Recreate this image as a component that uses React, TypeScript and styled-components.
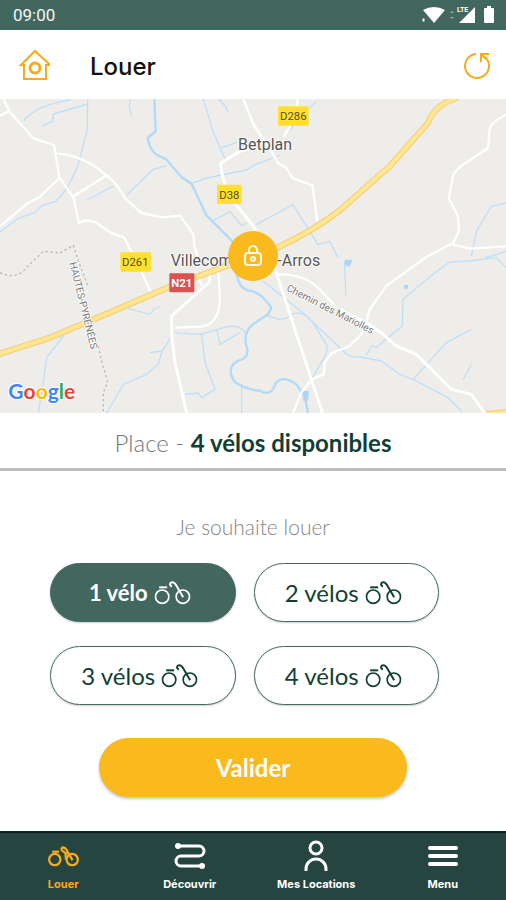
import React, { useState } from "react";
import styled, { createGlobalStyle } from "styled-components";

const colors = {
  green: "#42675f",
  darkGreen: "#264440",
  ink: "#123f34",
  yellow: "#fab91c",
  amber: "#f5ab1a",
};

const GlobalStyle = createGlobalStyle`
  * { box-sizing: border-box; }
  body { margin: 0; background: #fff; font-family: Lato, "Open Sans", sans-serif; }
  button { font: inherit; border: 0; padding: 0; background: none; cursor: pointer; }
  svg { display: block; }
`;

const Page = styled.div`
  display: flex;
  flex-direction: column;
  min-height: 100vh;
`;

const StatusBar = styled.div`
  display: flex;
  align-items: center;
  justify-content: space-between;
  height: 30px;
  padding: 0 1px 0 13px;
  background: ${colors.green};
  color: #f2f7f6;
  font: 17px/20px Roboto, sans-serif;
`;

const Header = styled.header`
  display: flex;
  align-items: center;
  height: 69px;
  padding: 0 15px 0 19px;
`;

const Title = styled.h1`
  flex: 1;
  margin: 0 0 0 38px;
  padding-top: 4px;
  color: #111;
  font: 500 24px/32px Inter, sans-serif;
`;

const IconButton = styled.button`
  color: ${colors.amber};
`;

const MapArea = styled.section`
  position: relative;
  height: 314px;
  overflow: hidden;
  background: #efedea;

  > svg { width: 100%; height: 100%; }
`;

const Pin = styled.button`
  position: absolute;
  top: 50%;
  left: 50%;
  display: grid;
  place-items: center;
  width: 50px;
  height: 50px;
  margin: -25px;
  border-radius: 50%;
  background: ${colors.yellow};
  color: #fff8e6;
`;

const Availability = styled.p`
  margin: 0;
  padding: 17px 0 12px;
  border-bottom: 3px solid #bdbdbd;
  color: #777;
  font-size: 24px;
  font-weight: 300;
  line-height: 26px;
  text-align: center;

  strong { color: ${colors.ink}; font-weight: 700; }
`;

const Form = styled.form`
  display: flex;
  flex: 1;
  flex-direction: column;
  align-items: center;
  padding: 42px 50px 32px;
`;

const Question = styled.h2`
  margin: 0 0 22px;
  color: #858585;
  font-size: 21px;
  font-weight: 300;
  line-height: 28px;
`;

const Choices = styled.div`
  display: grid;
  grid-template-columns: 1fr 1fr;
  gap: 24px 18px;
  align-self: stretch;
  margin-right: 17px;
`;

const Choice = styled.button<{ $active: boolean }>`
  display: flex;
  align-items: center;
  justify-content: center;
  gap: 6px;
  height: 59px;
  padding: 0 6px 0 0;
  border: 1px solid ${colors.green};
  border-radius: 30px;
  background: ${(p) => (p.$active ? colors.green : "#fff")};
  box-shadow: 0 1px 2px rgba(0, 0, 0, 0.2);
  color: ${(p) => (p.$active ? "#fff" : colors.ink)};
  font-size: ${(p) => (p.$active ? 22 : 24)}px;
  font-weight: ${(p) => (p.$active ? 700 : 400)};
`;

const Submit = styled.button`
  width: 76%;
  height: 59px;
  margin-top: 33px;
  border-radius: 30px;
  background: ${colors.yellow};
  box-shadow: 0 2px 3px rgba(0, 0, 0, 0.22);
  color: #fff;
  font-size: 24px;
  font-weight: 700;
`;

const TabBar = styled.nav`
  display: grid;
  grid-template-columns: repeat(4, 1fr);
  height: 69px;
  border-top: 2px solid #0e1f1d;
  background: ${colors.darkGreen};
`;

const Tab = styled.a<{ $active?: boolean }>`
  display: flex;
  flex-direction: column;
  align-items: center;
  padding-top: 7px;
  color: ${(p) => (p.$active ? colors.amber : "#fff")};
  font: 700 11px/14px Inter, sans-serif;
  text-decoration: none;
  white-space: nowrap;
`;

const TabIcon = styled.span`
  display: grid;
  place-items: center;
  height: 32px;
  margin-bottom: 5px;
`;

function Bike({ heavy = false }: { heavy?: boolean }) {
  return (
    <svg width={heavy ? 31 : 37} height={heavy ? 21 : 24} viewBox="0 0 110 72" fill="none" stroke="currentColor" strokeWidth={heavy ? 8 : 5} aria-hidden="true">
      <circle cx="24" cy="47" r="20" />
      <circle cx="86" cy="47" r="20" />
      <path d="M15 19h24" strokeWidth={heavy ? 8 : 6} />
      <path d="M87 49L66 13Q59 1 50 5 44 12 53 17" strokeWidth={heavy ? 8 : 6} />
      {heavy && <path d="M53 17L64 26 72 22M62 25L64 47" />}
    </svg>
  );
}

function StatusIcons() {
  return (
    <svg width="84" height="20" viewBox="0 0 84 20" fill="#fff" aria-label="Wi-Fi, LTE, batterie">
      <path d="M2 5Q13-1 24 5L13 18z" />
      <path d="M1 13h3v4H1z" stroke={colors.green} />
      <path d="M29 8l2-2 2 2zM29 12l2 2 2-2z" opacity=".45" />
      <path d="M54 2v16H38z" />
      <path d="M36 0h12v8H36z" fill={colors.green} />
      <text x="36" y="7" fontSize="7" fontWeight="700" fontFamily="Roboto, sans-serif">LTE</text>
      <path d="M66 1h4v2h2q1 0 1 1v13q0 1-1 1h-8q-1 0-1-1V4q0-1 1-1h2z" />
    </svg>
  );
}

const minorRoads = [
  "M10 0L30 40 100 118 162 138 178 235 220 295 237 372Q260 357 290 372L330 400 372 415 395 460 425 520 452 580",
  "M168 163Q255 170 318 228 350 250 375 298L425 342 485 355 540 350 580 405 583 440 600 500",
  "M318 230L220 292M175 240L120 293 80 315 0 382M0 50L25 38",
  "M730 0L760 75 819 165 834 192 859 207 877 237 937 259 947 327 952 370",
  "M894 0L886 40 869 85 850 115",
  "M1518 47Q1469 72 1469 92L1464 147 1385 200Q1355 222 1357 245L1346 297 1374 352 1377 397 1359 432 1280 473 1159 561 1109 631 1099 671 1084 706 1049 741 994 763 974 791 971 826 934 841 904 881 879 942",
  "M1359 437L1409 449 1518 442M834 526Q910 525 954 566L1009 625",
  "M655 521L660 591Q660 680 600 683L525 686M595 535L606 560",
];
const mainRoads = [
  "M768 142L720 157 662 193 667 230 690 300 712 322 759 380 829 521 967 942",
  "M1020 632L1099 671 1144 701 1189 741 1249 766 1289 806 1354 871 1414 886 1454 942",
  "M630 516L628 549 515 651 515 711 525 791 560 942",
];
const streams = [
  "M213 2Q105 20 72 65M263 15L160 45 157 67 125 82",
  "M263 0L262 90 235 195Q205 275 165 308L125 320 105 340 55 358 0 400",
  "M390 0L388 25 395 50M500 200L460 211 380 288M340 261L262 303",
  "M610 0L640 100 675 180M660 148L710 130M655 0L675 20 685 40",
  "M575 253L620 237 740 213 759 200 840 168M869 95L895 55 950 8",
  "M640 365L690 338 725 380 740 373",
  "M769 377L879 317 954 437 989 427 1014 475",
  "M1518 312L1474 322 1429 397 1414 472M1518 457L1455 477",
  "M1518 505L1489 476 1409 486 1349 489 1299 526 1209 601 1207 681 1129 745 1115 740 1099 769",
  "M789 546L909 641 1035 761Q1050 775 1080 774L1144 786 1199 826 1239 841 1344 896 1384 936",
  "M804 651L839 661 859 658Q900 620 939 671L975 730Q990 750 970 780L934 841",
  "M1239 841L1339 731 1414 691M1389 843L1414 796M1034 486L1037 590",
  "M385 629L450 646 462 630 480 623M190 711L140 776 130 850 115 942",
  "M515 711L485 760 475 795 440 826 370 856 320 942M485 756L450 761",
  "M525 701L600 706 690 681Q725 680 735 701M605 706L615 791 645 871 605 896 595 882 555 886",
  "M650 691L660 736 720 701M725 856V942",
];

function RoadMap() {
  return (
    <svg viewBox="0 0 1518 942" preserveAspectRatio="xMidYMid slice" fill="none" strokeLinejoin="round" fontFamily="Roboto, sans-serif" role="img" aria-label="Carte de Villecomtal-sur-Arros">
      <g stroke="#bfdff6" strokeWidth="4">
        {streams.map((d) => <path key={d} d={d} />)}
      </g>
      <path d="M463 0L467 97 443 117Q450 155 470 167L500 182 545 235 575 255 620 350 700 430M710 525Q715 565 745 575 780 575 814 626L804 646 759 676Q725 702 742 750 745 780 715 785 675 805 705 850 740 873 780 875 815 895 828 850 850 828 889 856L914 891 924 942" stroke="#b2daf7" strokeWidth="7" />
      <path d="M907 876h20l-4 29h-13zM1034 482h24l-10 22-13-5zM1212 558l14 0-5 14-10-4zM1124 227l14-7-9 14z" fill="#acd6f7" />
      <g stroke="#fff" strokeWidth="7">
        {minorRoads.map((d) => <path key={d} d={d} />)}
      </g>
      <g stroke="#fff" strokeWidth="9">
        {mainRoads.map((d) => <path key={d} d={d} />)}
      </g>
      {[["#f4cf7e", 19], ["#ffe690", 12]].map(([color, width]) => (
        <path key={color} stroke={color as string} strokeWidth={width} d="M-10 767L150 716 270 666 510 563 660 508 834 445Q950 390 1024 330L1169 202 1284 72Q1300 20 1374-5M1460 945L1530 938" />
      ))}
      <path d="M0 521Q50 545 80 505L130 457 180 462 220 439 235 485 265 565M295 741L303 780 323 850 310 880V942" stroke="#bbb7b4" strokeWidth="4" strokeDasharray="7 8" />

      <g fill="#ffe031">
        <rect x="834" y="22" width="92" height="58" rx="4" />
        <rect x="651" y="257" width="74" height="58" rx="4" />
        <rect x="361" y="460" width="92" height="58" rx="4" />
      </g>
      <rect x="508" y="523" width="75" height="57" rx="3" fill="#dc5252" />
      <g fill="#574e1d" fontSize="34" textAnchor="middle">
        <text x="880" y="64">D286</text>
        <text x="688" y="299">D38</text>
        <text x="406" y="502">D261</text>
        <text x="545" y="564" fill="#fff" fontWeight="700">N21</text>
      </g>
      <g fill="#555" stroke="#fff" strokeWidth="5" paintOrder="stroke" fontSize="48">
        <text x="714" y="153">Betplan</text>
        <text x="512" y="502">Villecomtal-sur-Arros</text>
      </g>
      <g fill="#777" stroke="#fff" strokeWidth="5" paintOrder="stroke" fontSize="30">
        <text transform="translate(208 492) rotate(76)">HAUTES-PYRÉNÉES</text>
        <text transform="translate(858 574) rotate(27)">Chemin des Mariolles</text>
      </g>
      <g fontFamily="Lato, sans-serif" fontSize="63" fontWeight="700" stroke="#fff" strokeWidth="6" paintOrder="stroke">
        <text x="25" y="900">
          <tspan fill="#4285f4">G</tspan><tspan fill="#ea4335">o</tspan><tspan fill="#fbbc05">o</tspan><tspan fill="#4285f4">g</tspan><tspan fill="#34a853">l</tspan><tspan fill="#ea4335">e</tspan>
        </text>
      </g>
    </svg>
  );
}

export default function App() {
  const [count, setCount] = useState(1);
  return (
    <Page>
      <GlobalStyle />
      <StatusBar>
        <time>09:00</time>
        <StatusIcons />
      </StatusBar>
      <Header>
        <IconButton aria-label="Accueil">
          <svg width="33" height="32" viewBox="0 0 33 32" fill="none" stroke="currentColor" strokeWidth="2">
            <path d="M5 16H2L16 2l14 13v1h-3v14H5z" />
            <circle cx="16" cy="19" r="5" strokeWidth="3" />
          </svg>
        </IconButton>
        <Title>Louer</Title>
        <IconButton aria-label="Actualiser">
          <svg width="28" height="28" viewBox="0 0 28 28" fill="none" stroke="currentColor" strokeWidth="2">
            <path d="M13 3A12 12 0 1 0 22 6" />
            <path d="M18 11V3h8M18 3l5 5" />
          </svg>
        </IconButton>
      </Header>
      <MapArea>
        <RoadMap />
        <Pin aria-label="Station Place">
          <svg width="20" height="24" viewBox="0 0 20 24" fill="none" stroke="currentColor" strokeWidth="2">
            <rect x="2" y="9" width="16" height="12" rx="3" />
            <path d="M6 9V6a4 4 0 0 1 8 0v3" />
            <circle cx="10" cy="15" r="3" fill="currentColor" stroke="none" />
            <circle cx="10" cy="15" r="1" fill={colors.yellow} stroke="none" />
          </svg>
        </Pin>
      </MapArea>
      <Availability>Place - <strong>4 vélos disponibles</strong></Availability>
      <Form onSubmit={(e) => e.preventDefault()}>
        <Question>Je souhaite louer</Question>
        <Choices>
          {[1, 2, 3, 4].map((n) => (
            <Choice key={n} type="button" $active={n === count} aria-pressed={n === count} onClick={() => setCount(n)}>
              {n} {n > 1 ? "vélos" : "vélo"}
              <Bike />
            </Choice>
          ))}
        </Choices>
        <Submit type="submit">Valider</Submit>
      </Form>
      <TabBar>
        <Tab href="#louer" $active aria-current="page">
          <TabIcon><Bike heavy /></TabIcon>
          Louer
        </Tab>
        <Tab href="#decouvrir">
          <TabIcon>
            <svg width="32" height="28" viewBox="0 0 32 28" fill="none" stroke="currentColor" strokeWidth="3">
              <path d="M4 4h21a5 5 0 0 1 0 10H7a5 5 0 0 0 0 10h21" />
              <circle cx="4" cy="4" r="3" fill="currentColor" stroke="none" />
              <circle cx="28" cy="24" r="3" fill="currentColor" stroke="none" />
            </svg>
          </TabIcon>
          Découvrir
        </Tab>
        <Tab href="#locations">
          <TabIcon>
            <svg width="26" height="32" viewBox="0 0 26 32" fill="none" stroke="currentColor" strokeWidth="3">
              <circle cx="13" cy="8" r="6" />
              <path d="M3 31v-2a10 10 0 0 1 20 0v2" />
            </svg>
          </TabIcon>
          Mes Locations
        </Tab>
        <Tab href="#menu">
          <TabIcon>
            <svg width="30" height="22" viewBox="0 0 30 22" fill="none" stroke="currentColor" strokeWidth="4" strokeLinecap="round">
              <path d="M2 3h26M2 11h26M2 19h26" />
            </svg>
          </TabIcon>
          Menu
        </Tab>
      </TabBar>
    </Page>
  );
}
